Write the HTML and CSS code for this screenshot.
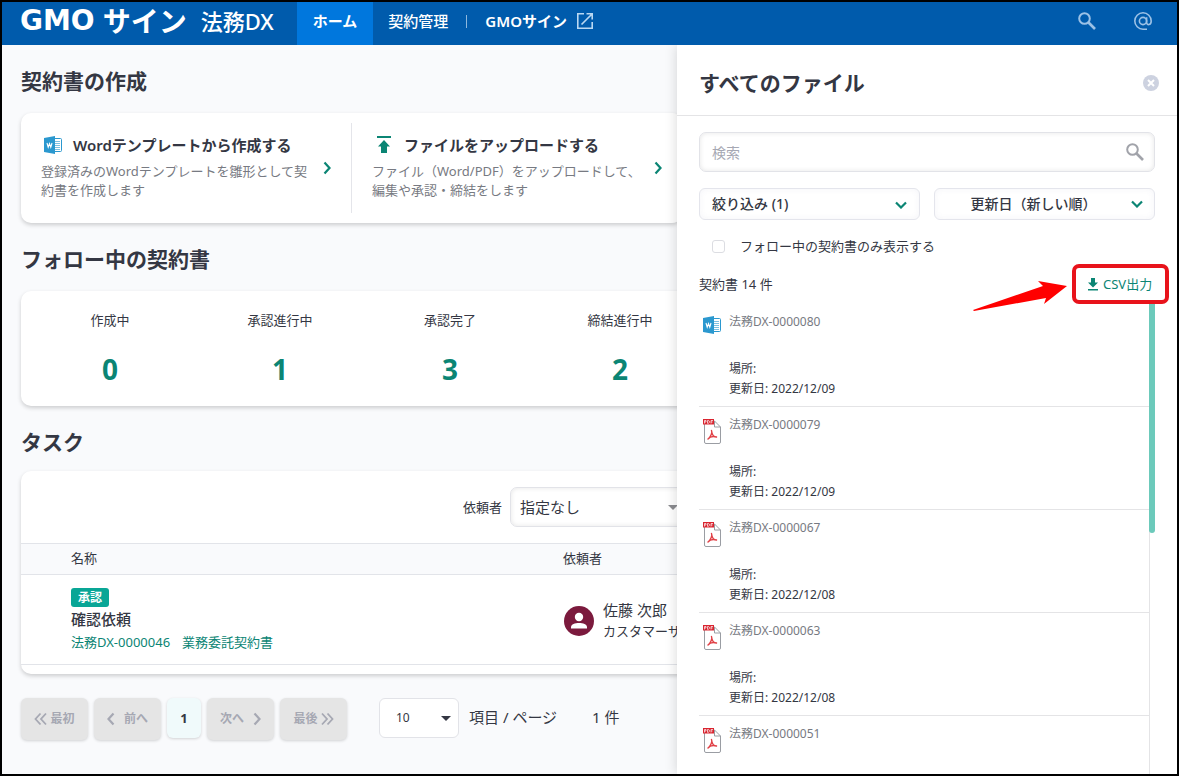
FILE: index.html
```html
<!DOCTYPE html>
<html lang="ja">
<head>
<meta charset="utf-8">
<meta name="viewport" content="width=device-width, initial-scale=1">
<title>GMOサイン 法務DX</title>
<link rel="stylesheet" href="styles.css">
</head>
<body>
<svg class="sprite" aria-hidden="true">
  <symbol id="i-search" viewBox="0 0 18 18"><circle cx="6.5" cy="6.5" r="5.3" fill="none" stroke="currentColor" stroke-width="2"/><path d="M10.5 10.5L17 17" stroke="currentColor" stroke-width="2.6"/></symbol>
  <symbol id="i-down" viewBox="0 0 12 8"><path d="M1 1.500L6 6.500l5-5" fill="none" stroke="currentColor" stroke-width="2.200"/></symbol>
  <symbol id="i-right" viewBox="0 0 8 14"><path d="M1.500 1.500L6.500 7l-5 5.500" fill="none" stroke="currentColor" stroke-width="2.200"/></symbol>
  <symbol id="i-left" viewBox="0 0 8 14"><path d="M6.500 1.500L1.500 7l5 5.500" fill="none" stroke="currentColor" stroke-width="2.200"/></symbol>
  <symbol id="i-first" viewBox="0 0 13 14"><path d="M6.500 1.500L1.500 7l5 5.500M12 1.500L7 7l5 5.500" fill="none" stroke="currentColor" stroke-width="1.800"/></symbol>
  <symbol id="i-last" viewBox="0 0 13 14"><path d="M1 1.500L6 7l-5 5.500M6.500 1.500L11.500 7l-5 5.500" fill="none" stroke="currentColor" stroke-width="1.800"/></symbol>
  <symbol id="i-caret" viewBox="0 0 10 5"><path d="M0 0h10L5 5z" fill="currentColor"/></symbol>
  <symbol id="i-word" viewBox="0 0 18 18"><path d="M9 2.500h7.500a1 1 0 0 1 1 1v11a1 1 0 0 1-1 1H9z" fill="#fff" stroke="#2b98cf"/><path d="M11 5.500h5M11 7.500h5M11 9.500h5M11 11.500h5M11 13.500h5" stroke="#7cc0e2"/><path d="M0 2L11 0v18L0 16z" fill="#2b98cf"/><path d="M3 7L4.200 11.200l1.300-3.500 1.300 3.500L8 7" fill="none" stroke="#fff" stroke-width="1.100"/></symbol>
  <symbol id="i-pdf" viewBox="0 0 18 25"><path d="M1.500 5v18a1.500 1.500 0 0 0 1.500 1.500h13a1.500 1.500 0 0 0 1.500-1.500V8L11.500 2H10" fill="#fff" stroke="#9a9da3"/><path d="M11.500 2v6h6" fill="none" stroke="#9a9da3"/><path d="M0 0h11v5.500H0z" fill="#d9242f"/><path d="M1.500 4.500v-3h1.500v1.500H1.500M4.500 1.500v2.800h1l.8-.8V2l-.6-.5zM8 4.500v-3h2M8 3h1.500" fill="none" stroke="#fff" stroke-width=".7"/><path d="M8.500 11.500c1 2-.5 6-3.500 8.500 2-2.500 5-3 8.500-2-2.500 0-4.500-2-5-6.500z" fill="none" stroke="#e04046" stroke-width="1.400" stroke-linejoin="round"/></symbol>
</svg>

<header class="topbar">
  <a class="logo" href="#"><span class="logo-gmo">GMO</span><span class="logo-sign">サイン</span><span class="logo-dx">法務DX</span></a>
  <nav class="nav">
    <a class="nav-link nav-active" href="#">ホーム</a>
    <a class="nav-link" href="#">契約管理</a>
    <span class="nav-sep"></span>
    <a class="nav-link nav-ext" href="#">GMOサイン
      <svg class="ic16" viewBox="0 0 16 16" fill="none" stroke="currentColor" stroke-width="1.600"><path d="M7 .8H.8v14.400h14.400V9M9.500.8h5.700v5.700M15 1L4.500 11.500"/></svg></a>
  </nav>
  <div class="top-tools">
    <button class="plain" aria-label="検索"><svg class="ic18"><use href="#i-search"/></svg></button>
    <button class="plain" aria-label="メンション"><svg class="ic18" viewBox="0 0 18 18" fill="none" stroke="currentColor" stroke-width="1.600"><circle cx="9" cy="9" r="3.600"/><path d="M12.600 5.200v5.300c0 3 4.600 3 4.600-1.500A8.200 8.200 0 1 0 9 17.200h4"/></svg></button>
  </div>
</header>

<div class="layout">
  <main class="content">
    <h2 class="heading">契約書の作成</h2>
    <section class="card create">
      <a class="create-item" href="#">
        <div class="create-body">
          <h3 class="create-title"><svg class="ic18"><use href="#i-word"/></svg>Wordテンプレートから作成する</h3>
          <p class="create-text">登録済みのWordテンプレートを雛形として契約書を作成します</p>
        </div>
        <svg class="chev"><use href="#i-right"/></svg>
      </a>
      <a class="create-item" href="#">
        <div class="create-body">
          <h3 class="create-title create-upload"><svg class="ic18" viewBox="0 0 18 18" fill="currentColor"><path d="M2 0h14v2H2zM9 4l6 6.500h-3V17H6v-6.500H3z"/></svg>ファイルをアップロードする</h3>
          <p class="create-text">ファイル（Word/PDF）をアップロードして、<br>編集や承認・締結をします</p>
        </div>
        <svg class="chev"><use href="#i-right"/></svg>
      </a>
    </section>

    <h2 class="heading">フォロー中の契約書</h2>
    <section class="card stats">
      <div class="stat"><span>作成中</span><strong>0</strong></div>
      <div class="stat"><span>承認進行中</span><strong>1</strong></div>
      <div class="stat"><span>承認完了</span><strong>3</strong></div>
      <div class="stat"><span>締結進行中</span><strong>2</strong></div>
    </section>

    <h2 class="heading">タスク</h2>
    <section class="card tasks">
      <div class="task-filter">
        <label for="requester">依頼者</label>
        <div class="select-wrap">
          <select id="requester" class="field requester"><option>指定なし</option></select>
          <svg class="caret caret-grey"><use href="#i-caret"/></svg>
        </div>
      </div>
      <table class="task-table">
        <thead><tr><th class="col-name">名称</th><th>依頼者</th></tr></thead>
        <tbody><tr>
          <td class="col-name">
            <span class="badge">承認</span>
            <div class="task-name">確認依頼</div>
            <a class="task-link" href="#"><span>法務DX-0000046</span><span>業務委託契約書</span></a>
          </td>
          <td>
            <div class="person">
              <svg class="avatar" viewBox="0 0 30 30"><circle cx="15" cy="15" r="15" fill="#7b1a3d"/><circle cx="15" cy="11" r="4.200" fill="#fff"/><path d="M7 22.500v-1.500c0-5.500 16-5.500 16 0v1.500z" fill="#fff"/></svg>
              <div><div class="person-name">佐藤 次郎</div><div class="person-dept">カスタマーサ</div></div>
            </div>
          </td>
        </tr></tbody>
      </table>
    </section>

    <div class="pager">
      <button class="page-btn" disabled><svg class="ic-double"><use href="#i-first"/></svg>最初</button>
      <button class="page-btn page-wide" disabled><svg class="ic-single"><use href="#i-left"/></svg>前へ</button>
      <button class="page-btn page-current">1</button>
      <button class="page-btn page-wide" disabled>次へ<svg class="ic-single"><use href="#i-right"/></svg></button>
      <button class="page-btn" disabled>最後<svg class="ic-double"><use href="#i-last"/></svg></button>
      <div class="select-wrap per-page">
        <select id="size" class="size-select"><option>10</option></select>
        <svg class="caret caret-small"><use href="#i-caret"/></svg>
      </div>
      <label for="size">項目 / ページ</label>
      <span class="total">1 件</span>
    </div>
  </main>

  <aside class="panel">
    <div class="panel-head">
      <h2 class="panel-title">すべてのファイル</h2>
      <button class="plain close" aria-label="閉じる"><svg class="ic16" viewBox="0 0 16 16"><circle cx="8" cy="8" r="8" fill="#cdd2e0"/><path d="M5 5l6 6M11 5l-6 6" stroke="#fff" stroke-width="2"/></svg></button>
    </div>
    <div class="panel-body">
      <div class="search">
        <input class="field search-input" type="text" placeholder="検索" aria-label="検索">
        <svg class="search-icon"><use href="#i-search"/></svg>
      </div>
      <div class="filters">
        <button class="drop">絞り込み (1)<svg class="drop-icon"><use href="#i-down"/></svg></button>
        <div class="drop-wrap">
          <select class="drop drop-sort" aria-label="並び順"><option>更新日（新しい順）</option></select>
          <svg class="drop-icon"><use href="#i-down"/></svg>
        </div>
      </div>
      <label class="follow"><input class="tick" type="checkbox">フォロー中の契約書のみ表示する</label>
      <div class="count-row">
        <span>契約書 14 件</span>
        <svg class="pointer" viewBox="0 0 94 32"><path d="M0 30L70 6 65 1 94 6 71 24 73 18 1 31z" fill="#f00"/></svg>
        <button class="csv"><svg class="csv-icon" viewBox="0 0 10 13" fill="currentColor"><path d="M3 0h4v4.500h3L5 9.500 0 4.500h3zM0 11h10v1.500H0z"/></svg>CSV出力</button>
      </div>
      <div class="list-area">
        <ul class="files">
          <li class="file"><svg class="file-icon word"><use href="#i-word"/></svg><div><a class="file-name" href="#">法務DX-0000080</a><div>場所:</div><div>更新日: 2022/12/09</div></div></li>
          <li class="file"><svg class="file-icon"><use href="#i-pdf"/></svg><div><a class="file-name" href="#">法務DX-0000079</a><div>場所:</div><div>更新日: 2022/12/09</div></div></li>
          <li class="file"><svg class="file-icon"><use href="#i-pdf"/></svg><div><a class="file-name" href="#">法務DX-0000067</a><div>場所:</div><div>更新日: 2022/12/08</div></div></li>
          <li class="file"><svg class="file-icon"><use href="#i-pdf"/></svg><div><a class="file-name" href="#">法務DX-0000063</a><div>場所:</div><div>更新日: 2022/12/08</div></div></li>
          <li class="file"><svg class="file-icon"><use href="#i-pdf"/></svg><div><a class="file-name" href="#">法務DX-0000051</a></div></li>
        </ul>
        <div class="scroll"><div class="thumb"></div></div>
      </div>
    </div>
  </aside>
</div>
</body>
</html>
```

FILE: styles.css
```css
* { box-sizing: border-box; }
body {
  margin: 0;
  height: 100vh;
  border: 2px solid #000;
  display: flex;
  flex-direction: column;
  overflow: hidden;
  background: #f9fafc;
  color: #343743;
  font: 13px/20px "Noto Sans", "Noto Sans CJK JP", sans-serif;
}
h2, h3, p, ul { margin: 0; padding: 0; }
a { color: inherit; text-decoration: none; }
button, select, input { font: inherit; color: inherit; margin: 0; }
svg { display: block; flex: none; }
.sprite { position: absolute; width: 0; height: 0; }
.ic16 { width: 16px; height: 16px; }
.ic18 { width: 18px; height: 18px; }
.plain { border: 0; padding: 0; background: none; }

/* top bar */
.topbar {
  flex: none;
  height: 43px;
  display: flex;
  align-items: stretch;
  background: #005bac;
  color: #fff;
}
.logo { display: flex; align-items: center; padding: 0 23px 5px 18px; line-height: 28px; white-space: nowrap; }
.logo-gmo { font-family: "DejaVu Sans", sans-serif; font-weight: bold; font-size: 28px; }
.logo-sign { margin-left: 8px; font-size: 28px; font-weight: bold; }
.logo-dx { margin-left: 14px; font-size: 22px; font-weight: 500; }
.nav { display: flex; font-size: 15px; font-weight: 500; }
.nav-link { display: flex; align-items: center; padding: 0 15px 5px; }
.nav-active { padding: 0 16px 5px; background: #0077dd; font-weight: bold; }
.nav-sep { width: 1px; height: 13px; margin: 13px 3px 0; background: #8db8de; }
.nav-ext { gap: 10px; font-weight: 600; }
.nav-ext svg { color: #b9d8f2; }
.top-tools { margin-left: auto; display: flex; align-items: center; gap: 38px; padding: 0 25px 5px 0; color: #9bc1e6; }

/* page frame */
.layout { flex: 1; display: flex; min-height: 0; }
.content { flex: 1; min-width: 0; overflow: hidden; padding: 20px 0 0 19px; }
.heading { font-size: 21px; line-height: 32px; font-weight: 600; }
.card {
  background: #fff;
  border-radius: 10px;
  box-shadow: 0 2px 4px rgba(0, 0, 0, .18);
}

.create { display: flex; margin: 16px -5px 20px 0; height: 110px; padding: 10px 0; }
.create-item { flex: 1; display: flex; padding: 9px 20px 0; }
.create-item + .create-item { border-left: 1px solid #e4e5ea; }
.create-body { flex: 1; }
.create-title { display: flex; align-items: center; gap: 11px; padding-left: 3px; font-size: 15px; line-height: 26px; font-weight: 600; white-space: nowrap; }
.create-upload svg { color: #0b8574; }
.create-text { margin-top: 4px; line-height: 19px; color: #777a82; width: 271px; }
.chev { width: 8px; height: 14px; margin-top: 29px; color: #0b8574; }

.stats { display: flex; margin: 16px -32px 20px 0; padding: 19px 4px 18px; }
.stat { flex: 1; display: flex; flex-direction: column; align-items: center; }
.stat strong { margin-top: 20px; font-size: 28px; line-height: 38px; color: #0b8574; }

.tasks { margin: 13px -32px 24px 0; padding-bottom: 9px; }
.task-filter { display: flex; justify-content: flex-end; align-items: center; gap: 8px; padding: 16px 19px; }
.select-wrap { position: relative; }
.field { border: 1px solid #e2e3e8; border-radius: 7px; background: #fff; box-shadow: inset 0 0 5px rgba(0, 0, 0, .1); }
select { appearance: none; }
.requester { width: 180px; height: 40px; padding: 0 9px; font-size: 15px; }
.caret { position: absolute; right: 8px; top: 18px; width: 10px; height: 5px; pointer-events: none; }
.caret-grey { right: 12px; color: #8b8c90; }
.task-table { width: 100%; border-collapse: collapse; text-align: left; }
.task-table th { padding: 4px 0 6px; font-weight: normal; background: #f9fafc; border: solid #e2e4e9; border-width: 1px 0; }
.task-table td { padding: 12px 0 10px; border-bottom: 1px solid #e2e4e9; vertical-align: middle; }
.task-table .col-name { width: 542px; padding-left: 50px; }
.badge { display: inline-block; padding: 0 7px; border-radius: 3px; background: #09a696; color: #fff; font-size: 12px; line-height: 19px; font-weight: bold; }
.task-name { font-size: 15px; line-height: 24px; font-weight: 500; }
.task-link { display: flex; gap: 12px; line-height: 23px; color: #0b8574; }
.person { display: flex; align-items: center; gap: 9px; padding-left: 1px; white-space: nowrap; }
.avatar { width: 30px; height: 30px; }
.person-name { font-size: 15px; line-height: 21px; }
.person-dept { line-height: 20px; }

.pager { display: flex; align-items: flex-start; gap: 6px; font-size: 15px; line-height: 38px; }
.page-btn {
  width: 67px;
  height: 42px;
  border: 0;
  border-radius: 6px;
  padding: 0;
  display: flex;
  justify-content: center;
  align-items: center;
  gap: 3px;
  background: #e5e5e5;
  color: #a6a8b3;
  font-size: 12px;
  font-weight: bold;
  box-shadow: 0 1px 3px rgba(0, 0, 0, .16);
}
.page-wide { gap: 9px; }
.page-current { width: 34px; height: 40px; background: #f0fafb; color: #343743; font-size: 13px; }
.ic-double { width: 13px; height: 14px; }
.ic-single { width: 8px; height: 14px; }
.per-page { margin: 0 4px 0 26px; }
.size-select { display: block; width: 80px; height: 40px; padding: 0 16px; border: 1px solid #e2e3e8; border-radius: 6px; background: #fff; font-size: 12px; }
.total { margin-left: 29px; }

/* file panel */
.panel {
  flex: none;
  width: 500px;
  display: flex;
  flex-direction: column;
  position: relative;
  background: #fff;
  box-shadow: 0 0 12px rgba(0, 0, 0, .16);
  clip-path: inset(0 0 0 -16px);
}
.panel-head { display: flex; justify-content: space-between; align-items: center; height: 71px; padding: 6px 18px 0 22px; border-bottom: 1px solid #e4e4e6; }
.panel-title { font-size: 21px; line-height: 32px; font-weight: 600; }
.panel-body { flex: 1; min-height: 0; display: flex; flex-direction: column; padding: 16px 22px 0; }
.search { position: relative; }
.search-input { display: block; width: 100%; height: 40px; padding: 0 12px; font-size: 14px; }
.search-input::placeholder { color: #a6a8b3; }
.search-icon { position: absolute; right: 11px; top: 11px; width: 18px; height: 18px; color: #a1a3aa; }
.filters { display: grid; grid-template-columns: 1fr 1fr; gap: 14px; margin-top: 16px; }
.drop-wrap { position: relative; }
.drop {
  position: relative;
  width: 100%;
  height: 32px;
  padding: 0 12px;
  border: 1px solid #e4e5ec;
  border-radius: 6px;
  background: #fff;
  box-shadow: inset 0 0 6px rgba(100, 100, 160, .07);
  font-size: 14px;
  font-weight: 500;
  text-align: left;
}
.drop-sort { padding: 0 34px 0 12px; text-align: center; text-align-last: center; }
.drop-icon { position: absolute; right: 12px; top: 12px; width: 12px; height: 8px; color: #0b8574; pointer-events: none; }
.follow { display: flex; align-items: center; gap: 15px; margin: 16px 0 0 13px; }
.tick { appearance: none; width: 13px; height: 13px; border: 1px solid #dcdde2; border-radius: 3px; background: #fff; }
.count-row { position: relative; display: flex; justify-content: space-between; align-items: center; height: 40px; margin: 8px -14px 0 0; }
.pointer { position: absolute; right: 102px; top: 16px; width: 94px; height: 32px; }
.csv {
  display: flex;
  align-items: center;
  gap: 5px;
  width: 97px;
  height: 40px;
  padding: 0 0 0 12px;
  border: 4px solid #e8131b;
  border-radius: 7px;
  background: #fff;
  color: #0b8574;
}
.csv-icon { width: 10px; height: 13px; }
.list-area { flex: 1; min-height: 0; display: flex; }
.files { flex: 1; overflow: hidden; list-style: none; font-size: 12px; }
.file { display: flex; gap: 8px; height: 103px; padding: 8px 0 0 4px; border-bottom: 1px solid #e4e4e6; }
.file-icon { width: 18px; height: 25px; margin-top: 4px; }
.word { height: 18px; }
.file-name { display: block; margin-bottom: 27px; color: #777a82; }
.scroll { width: 6px; border-left: 1px solid #e4e4e6; }
.thumb { width: 6px; height: 229px; margin-left: -1px; border-radius: 0 0 3px 3px; background: #6ccabb; }
```
